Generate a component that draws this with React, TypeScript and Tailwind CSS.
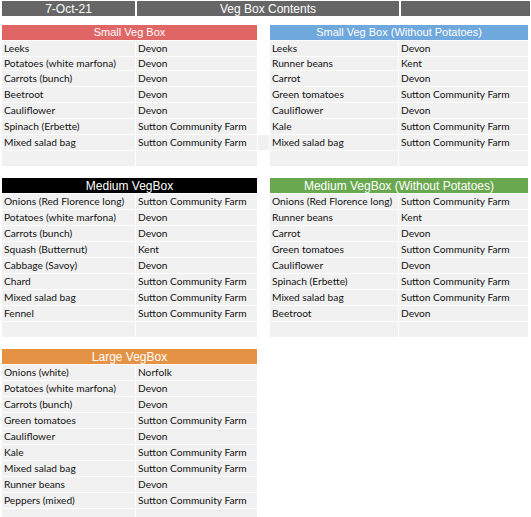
import React from "react";

type Row = [string, string];

const SCF = "Sutton Community Farm";

const small: Row[] = [
  ["Leeks", "Devon"],
  ["Potatoes (white marfona)", "Devon"],
  ["Carrots (bunch)", "Devon"],
  ["Beetroot", "Devon"],
  ["Cauliflower", "Devon"],
  ["Spinach (Erbette)", SCF],
  ["Mixed salad bag", SCF],
];

const smallNoPot: Row[] = [
  ["Leeks", "Devon"],
  ["Runner beans", "Kent"],
  ["Carrot", "Devon"],
  ["Green tomatoes", SCF],
  ["Cauliflower", "Devon"],
  ["Kale", SCF],
  ["Mixed salad bag", SCF],
];

const medium: Row[] = [
  ["Onions (Red Florence long)", SCF],
  ["Potatoes (white marfona)", "Devon"],
  ["Carrots (bunch)", "Devon"],
  ["Squash (Butternut)", "Kent"],
  ["Cabbage (Savoy)", "Devon"],
  ["Chard", SCF],
  ["Mixed salad bag", SCF],
  ["Fennel", SCF],
];

const mediumNoPot: Row[] = [
  ["Onions (Red Florence long)", SCF],
  ["Runner beans", "Kent"],
  ["Carrot", "Devon"],
  ["Green tomatoes", SCF],
  ["Cauliflower", "Devon"],
  ["Spinach (Erbette)", SCF],
  ["Mixed salad bag", SCF],
  ["Beetroot", "Devon"],
];

const large: Row[] = [
  ["Onions (white)", "Norfolk"],
  ["Potatoes (white marfona)", "Devon"],
  ["Carrots (bunch)", "Devon"],
  ["Green tomatoes", SCF],
  ["Cauliflower", "Devon"],
  ["Kale", SCF],
  ["Mixed salad bag", SCF],
  ["Runner beans", "Devon"],
  ["Peppers (mixed)", SCF],
];

const Cell = ({ text, fill, short }: { text?: string; fill: boolean; short?: boolean }) => (
  <div
    className={`${short ? "h-[13px]" : "h-[15px]"} ${fill ? "bg-[#f1f1f1]" : "bg-white"} flex items-center pl-[2px] text-[10.2px] leading-none text-[#111111] whitespace-nowrap overflow-hidden`}
  >
    {text}
  </div>
);

const Section = ({
  leftTitle,
  leftColor,
  leftSize,
  left,
  rightTitle,
  rightColor,
  rightSize,
  right,
  gapFillRow,
  shortRow,
}: {
  leftTitle: string;
  leftColor: string;
  leftSize: string;
  left: Row[];
  rightTitle?: string;
  rightColor?: string;
  rightSize?: string;
  right?: Row[];
  gapFillRow?: number;
  shortRow?: number;
}) => {
  const count = Math.max(left.length, right ? right.length : 0) + 1;
  const rows = Array.from({ length: count }, (_, i) => i);
  return (
    <div className="grid grid-cols-[133px_121px_11px_128px_129px] gap-px pl-[2px]">
      <div
        className={`col-span-2 h-[15px] ${leftColor} ${leftSize} flex items-center justify-center text-white leading-none font-['Liberation_Sans',sans-serif]`}
      >
        {leftTitle}
      </div>
      <div className="h-[15px]" />
      {rightTitle ? (
        <div
          className={`col-span-2 h-[15px] ${rightColor} ${rightSize} flex items-center justify-center text-white leading-none font-['Liberation_Sans',sans-serif]`}
        >
          {rightTitle}
        </div>
      ) : (
        <div className="col-span-2 h-[15px]" />
      )}
      {rows.map((i) => {
        const l = left[i];
        const r = right ? right[i] : undefined;
        const short = i === shortRow;
        const leftFill = i <= left.length;
        const rightFill = right ? i <= right.length : false;
        return (
          <React.Fragment key={i}>
            <Cell text={l?.[0]} fill={leftFill} short={short} />
            <Cell text={l?.[1]} fill={leftFill} short={short} />
            <Cell fill={i === gapFillRow} short={short} />
            <Cell text={r?.[0]} fill={rightFill} short={short} />
            <Cell text={r?.[1]} fill={rightFill} short={short} />
          </React.Fragment>
        );
      })}
    </div>
  );
};

export default function App() {
  return (
    <div className="w-[531px] bg-white pt-px font-['Lato',sans-serif]">
      <div className="grid grid-cols-[133px_262px_129px] gap-[2px] pl-[2px] font-['Liberation_Sans',sans-serif] text-[12px] text-white leading-none">
        <div className="h-[15px] bg-[#666666] flex items-center justify-center">7-Oct-21</div>
        <div className="h-[15px] bg-[#666666] flex items-center justify-center">Veg Box Contents</div>
        <div className="h-[15px] bg-[#666666]" />
      </div>

      <div className="mt-[9px]">
        <Section
          leftTitle="Small Veg Box"
          leftColor="bg-[#e06666]"
          leftSize="text-[11px]"
          left={small}
          rightTitle="Small Veg Box (Without Potatoes)"
          rightColor="bg-[#6fa8dc]"
          rightSize="text-[11px]"
          right={smallNoPot}
          gapFillRow={6}
          shortRow={1}
        />
      </div>

      <div className="mt-[12px]">
        <Section
          leftTitle="Medium VegBox"
          leftColor="bg-black"
          leftSize="text-[12px]"
          left={medium}
          rightTitle="Medium VegBox (Without Potatoes)"
          rightColor="bg-[#6aa84f]"
          rightSize="text-[12px]"
          right={mediumNoPot}
        />
      </div>

      <div className="mt-[12px]">
        <Section
          leftTitle="Large VegBox"
          leftColor="bg-[#e69245]"
          leftSize="text-[12px]"
          left={large}
        />
      </div>
    </div>
  );
}
